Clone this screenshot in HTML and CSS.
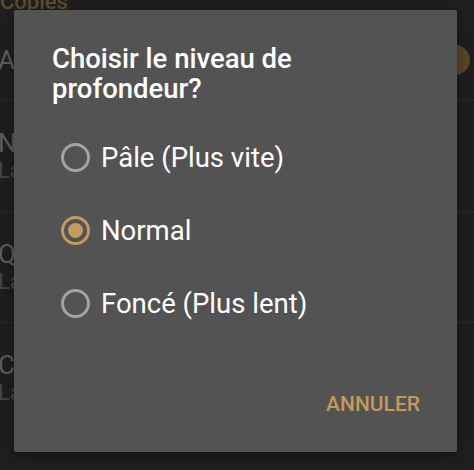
FILE: index.html
```html
<!DOCTYPE html>
<html lang="fr">
<head>
<meta charset="utf-8">
<link rel="stylesheet" href="styles.css">
</head>
<body>
<div class="screen">
  <div class="list">
    <div class="section">Copies</div>
    <div class="row row-first">
      <div class="row-text"><div class="row-title">Activer</div></div>
      <div class="toggle"><span class="thumb"></span></div>
    </div>
    <div class="row">
      <div class="row-text"><div class="row-title">Nombre</div><div class="row-sub">La valeur</div></div>
    </div>
    <div class="row">
      <div class="row-text"><div class="row-title">Qualité</div><div class="row-sub">La valeur</div></div>
    </div>
    <div class="row">
      <div class="row-text"><div class="row-title">Clair</div><div class="row-sub">La valeur</div></div>
    </div>
  </div>

  <div class="dialog" role="dialog">
    <h1 class="dialog-title">Choisir le niveau de profondeur?</h1>
    <div class="options">
      <label class="option"><span class="radio"></span><span class="option-label">Pâle (Plus vite)</span></label>
      <label class="option"><span class="radio radio-on"><span class="dot"></span></span><span class="option-label">Normal</span></label>
      <label class="option"><span class="radio"></span><span class="option-label">Foncé (Plus lent)</span></label>
    </div>
    <div class="actions"><span class="btn">ANNULER</span></div>
  </div>
</div>
</body>
</html>
```
FILE: styles.css
```css
html, body {
  margin: 0;
  padding: 0;
  background: #1f1f1f;
}
.screen {
  position: relative;
  width: 474px;
  height: 470px;
  overflow: hidden;
  font-family: Roboto, "Noto Sans", sans-serif;
}
.list {
  margin-top: -10px;
}
.section {
  color: #5f4d2d;
  font-size: 22px;
  font-weight: 500;
  line-height: 24px;
  height: 30px;
}
.row {
  display: flex;
  align-items: center;
  height: 111px;
  border-top: 1px solid #2a2a2a;
  box-sizing: border-box;
}
.row-first {
  height: 80px;
  border-top: none;
}
.row-text {
  flex: 1;
  margin-left: -2px;
}
.row-title {
  color: #5e5e5e;
  font-size: 26px;
  line-height: 30px;
}
.row-sub {
  color: #464646;
  font-size: 22px;
  line-height: 26px;
}
.toggle {
  width: 40px;
  height: 30px;
  position: relative;
  margin-right: 4px;
}
.thumb {
  position: absolute;
  right: 0;
  top: 0;
  width: 30px;
  height: 30px;
  border-radius: 50%;
  background: #5a4829;
}
.dialog {
  position: absolute;
  left: 14px;
  top: 10px;
  width: 443px;
  height: 442px;
  box-sizing: border-box;
  background: #545354;
  border-radius: 2px;
  box-shadow: 0 4px 16px rgba(0,0,0,0.4);
  padding: 34px 24px 0 38px;
  display: flex;
  flex-direction: column;
}
.dialog-title {
  margin: 0;
  color: #ffffff;
  font-size: 27.5px;
  font-weight: 500;
  line-height: 30px;
  width: 340px;
}
.options {
  margin-top: 17px;
  display: flex;
  flex-direction: column;
}
.option {
  display: flex;
  align-items: center;
  height: 73px;
  margin-left: 9px;
}
.radio {
  width: 29px;
  height: 29px;
  box-sizing: border-box;
  border: 3px solid #a3a3a3;
  border-radius: 50%;
  display: flex;
  align-items: center;
  justify-content: center;
  flex: none;
}
.radio-on {
  border-color: #c49b5c;
}
.dot {
  width: 15px;
  height: 15px;
  border-radius: 50%;
  background: #c49b5c;
}
.option-label {
  margin-left: 11px;
  color: #ffffff;
  font-size: 27.5px;
  line-height: 32px;
}
.actions {
  margin-top: auto;
  margin-bottom: 36px;
  display: flex;
  justify-content: flex-end;
}
.btn {
  color: #c29a5a;
  font-size: 21px;
  font-weight: 500;
  line-height: 24px;
  margin-right: 13px;
}
```
